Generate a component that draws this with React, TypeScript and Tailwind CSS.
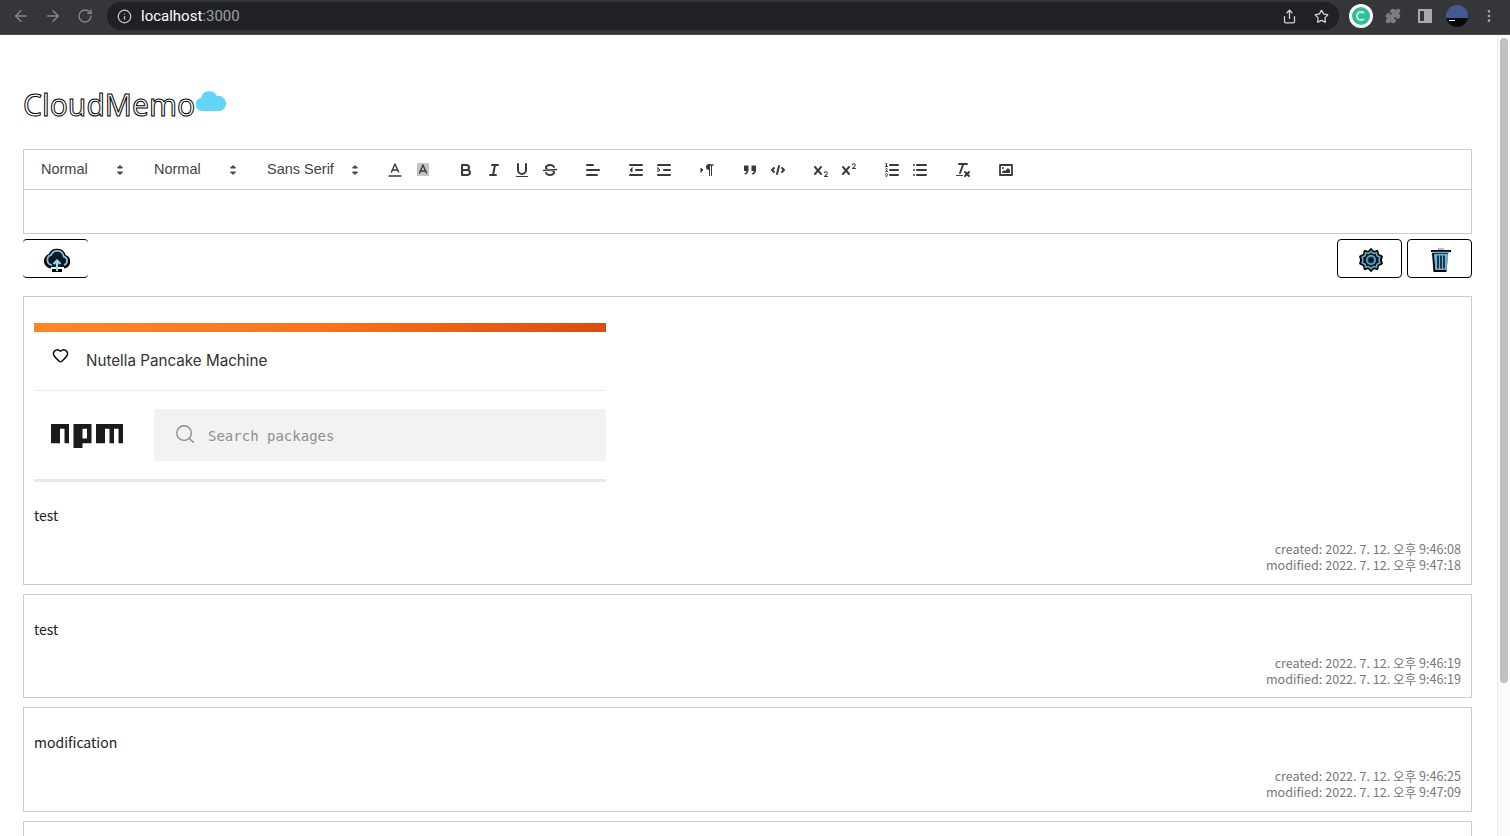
import { ArrowLeft, ArrowRight, RotateCw, Info, Share, Star, Puzzle, EllipsisVertical, Heart, Search } from "lucide-react";
import type { ReactNode } from "react";

const QlIcon = ({ children }: { children: ReactNode }) => (
  <button className="flex h-6 w-7 shrink-0 items-center justify-center">
    <svg viewBox="0 0 18 18" className="h-[18px] w-[18px] fill-none stroke-[#3a3a3a] stroke-2 [stroke-linecap:round] [stroke-linejoin:round]">
      {children}
    </svg>
  </button>
);

const Fill = "fill-[#3a3a3a] stroke-none";
const Thin = "stroke-[1.4px]";

const Picker = ({ label, w }: { label: string; w: string }) => (
  <div className={`relative mr-[15px] flex h-6 shrink-0 items-center pl-2 text-[14.5px] font-medium text-[#444] ${w}`}>
    {label}
    <svg viewBox="0 0 18 18" className="absolute right-[2px] top-[3px] h-[18px] w-[18px] fill-[#444] stroke-[#444] [stroke-linejoin:round]">
      <polygon points="6.5 11 9 13.5 11.5 11 6.5 11" />
      <polygon points="6.5 7 9 4.5 11.5 7 6.5 7" />
    </svg>
  </div>
);

const Group = ({ children }: { children: ReactNode }) => <div className="mr-[15px] flex shrink-0">{children}</div>;

const Toolbar = () => (
  <div className="flex h-[41px] items-center border border-[#ccc] py-2 pl-[9px] pr-2 [font-family:'Liberation_Sans',sans-serif]">
    <Picker label="Normal" w="w-[98px]" />
    <Picker label="Normal" w="w-[98px]" />
    <Picker label="Sans Serif" w="w-[107px]" />
    <Group>
      <QlIcon>
        <line className={Thin} x1="3" x2="15" y1="15" y2="15" />
        <polyline className={Thin} points="5.5 11 9 3 12.5 11" />
        <line className={Thin} x1="11.63" x2="6.38" y1="9" y2="9" />
      </QlIcon>
      <QlIcon>
        <rect x="3" y="2" width="12" height="13" className="fill-[#c4c4c4] stroke-none" />
        <polyline className={Thin} points="5.5 12 9 4 12.5 12" />
        <line className={Thin} x1="11.63" x2="6.38" y1="10" y2="10" />
      </QlIcon>
    </Group>
    <Group>
      <QlIcon>
        <path d="M5,4H9.5A2.5,2.5,0,0,1,12,6.5v0A2.5,2.5,0,0,1,9.5,9H5A0,0,0,0,1,5,9V4A0,0,0,0,1,5,4Z" />
        <path d="M5,9h5.5A2.5,2.5,0,0,1,13,11.5v0A2.5,2.5,0,0,1,10.5,14H5a0,0,0,0,1,0,0V9A0,0,0,0,1,5,9Z" />
      </QlIcon>
      <QlIcon>
        <line x1="7" x2="13" y1="4" y2="4" />
        <line x1="5" x2="11" y1="14" y2="14" />
        <line x1="8" x2="10" y1="14" y2="4" />
      </QlIcon>
      <QlIcon>
        <path d="M5,3V9a4.012,4.012,0,0,0,4,4H9a4.012,4.012,0,0,0,4-4V3" />
        <rect className={Fill} x="3" y="15" width="12" height="1" rx="0.5" />
      </QlIcon>
      <QlIcon>
        <line className={Thin} x1="15.5" x2="2.5" y1="8.5" y2="9.5" />
        <path className={Fill} d="M9.007,8C6.542,7.791,6,7.519,6,6.5,6,5.792,7.283,5,9,5c1.571,0,2.765.679,2.969,1.309a1,1,0,0,0,1.9-.618C13.356,4.106,11.354,3,9,3,6.2,3,4,4.538,4,6.5a3.2,3.2,0,0,0,.5,1.843Z" />
        <path className={Fill} d="M8.984,10C11.457,10.208,12,10.479,12,11.5c0,.708-1.283,1.5-3,1.5-1.571,0-2.765-.679-2.969-1.309a1,1,0,1,0-1.9.618C4.644,13.894,6.646,15,9,15c2.8,0,5-1.538,5-3.5a3.2,3.2,0,0,0-.5-1.843Z" />
      </QlIcon>
    </Group>
    <Group>
      <QlIcon>
        <line x1="3" x2="15" y1="9" y2="9" />
        <line x1="3" x2="13" y1="14" y2="14" />
        <line x1="3" x2="9" y1="4" y2="4" />
      </QlIcon>
    </Group>
    <Group>
      <QlIcon>
        <line x1="3" x2="15" y1="14" y2="14" />
        <line x1="3" x2="15" y1="4" y2="4" />
        <line x1="9" x2="15" y1="9" y2="9" />
        <polygon className="fill-[#3a3a3a] stroke-1" points="5 7 5 11 3 9 5 7" />
      </QlIcon>
      <QlIcon>
        <line x1="3" x2="15" y1="14" y2="14" />
        <line x1="3" x2="15" y1="4" y2="4" />
        <line x1="9" x2="15" y1="9" y2="9" />
        <polygon className="stroke-1" points="3 7 3 11 5 9 3 7" />
      </QlIcon>
    </Group>
    <Group>
      <QlIcon>
        <polygon className="fill-[#3a3a3a] stroke-1" points="3 11 5 9 3 7 3 11" />
        <line className={Thin} x1="15" x2="11" y1="4" y2="4" />
        <path className={Fill} d="M11,3a3,3,0,0,0,0,6h1V3H11Z" />
        <rect className={Fill} x="11" y="4" width="1" height="11" />
        <rect className={Fill} x="13" y="4" width="1" height="11" />
      </QlIcon>
    </Group>
    <Group>
      <QlIcon>
        <path className={Fill} d="M3 4.5h4.5V9c0 2.5-1.4 4.2-3.6 4.8l-.5-1.3c1.2-.5 1.8-1.2 1.9-2.5H3z" />
        <path className={Fill} d="M10.5 4.5H15V9c0 2.5-1.4 4.2-3.6 4.8l-.5-1.3c1.2-.5 1.8-1.2 1.9-2.5h-2.3z" />
      </QlIcon>
      <QlIcon>
        <polyline points="5 7 3 9 5 11" />
        <polyline points="13 7 15 9 13 11" />
        <line x1="10" x2="8" y1="5" y2="13" />
      </QlIcon>
    </Group>
    <Group>
      <QlIcon>
        <path className={Fill} d="M15.5,15H13.861a3.858,3.858,0,0,0,1.914-2.975,1.8,1.8,0,0,0-1.6-1.751A1.921,1.921,0,0,0,12.021,11.7a0.50013,0.50013,0,1,0,.957.291h0a0.914,0.914,0,0,1,1.053-.725,0.81,0.81,0,0,1,.744.762c0,1.076-1.16971,1.86982-1.93971,2.43082A1.45639,1.45639,0,0,0,12,15.5a0.5,0.5,0,0,0,.5.5h3A0.5,0.5,0,0,0,15.5,15Z" />
        <path className={Fill} d="M9.65,5.241a1,1,0,0,0-1.409.108L6,7.964,3.759,5.349A1,1,0,0,0,2.241,6.651L4.684,9.5,2.241,12.35a1,1,0,1,0,1.519,1.3L6,11.036l2.241,2.616a1,1,0,1,0,1.519-1.3L7.316,9.5,9.759,6.651A1,1,0,0,0,9.65,5.241Z" />
      </QlIcon>
      <QlIcon>
        <path className={Fill} d="M15.5,7H13.861a4.015,4.015,0,0,0,1.914-2.975,1.8,1.8,0,0,0-1.6-1.751A1.922,1.922,0,0,0,12.021,3.7a0.5,0.5,0,1,0,.957.291,0.917,0.917,0,0,1,1.053-.725,0.81,0.81,0,0,1,.744.762c0,1.077-1.164,1.925-1.934,2.486A1.423,1.423,0,0,0,12,7.5a0.5,0.5,0,0,0,.5.5h3A0.5,0.5,0,0,0,15.5,7Z" />
        <path className={Fill} d="M9.65,5.241a1,1,0,0,0-1.409.108L6,7.964,3.759,5.349A1,1,0,0,0,2.241,6.651L4.684,9.5,2.241,12.35a1,1,0,1,0,1.519,1.3L6,11.036l2.241,2.616a1,1,0,1,0,1.519-1.3L7.316,9.5,9.759,6.651A1,1,0,0,0,9.65,5.241Z" />
      </QlIcon>
    </Group>
    <Group>
      <QlIcon>
        <line x1="7" x2="15" y1="4" y2="4" />
        <line x1="7" x2="15" y1="9" y2="9" />
        <line x1="7" x2="15" y1="14" y2="14" />
        <line className="stroke-1" x1="2.5" x2="4.5" y1="5.5" y2="5.5" />
        <path className={Fill} d="M3.5,6A0.5,0.5,0,0,1,3,5.5V3.085l-0.276.138A0.5,0.5,0,0,1,2.053,3c-0.124-.247-0.023-0.324.224-0.447l1-.5A0.5,0.5,0,0,1,4,2.5v3A0.5,0.5,0,0,1,3.5,6Z" />
        <path className="stroke-1" d="M4.5,10.5h-2c0-.234,1.85-1.076,1.85-2.234A0.959,0.959,0,0,0,2.5,8.156" />
        <path className="stroke-1" d="M2.5,14.846a0.959,0.959,0,0,0,1.85-.109A0.7,0.7,0,0,0,3.75,14a0.688,0.688,0,0,0,.6-0.736,0.959,0.959,0,0,0-1.85-.109" />
      </QlIcon>
      <QlIcon>
        <line x1="6" x2="15" y1="4" y2="4" />
        <line x1="6" x2="15" y1="9" y2="9" />
        <line x1="6" x2="15" y1="14" y2="14" />
        <line x1="3" x2="3" y1="4" y2="4" />
        <line x1="3" x2="3" y1="9" y2="9" />
        <line x1="3" x2="3" y1="14" y2="14" />
      </QlIcon>
    </Group>
    <Group>
      <QlIcon>
        <line x1="5" x2="13" y1="3" y2="3" />
        <line x1="6" x2="9.35" y1="12" y2="3" />
        <line x1="11" x2="15" y1="11" y2="15" />
        <line x1="15" x2="11" y1="11" y2="15" />
        <rect className={Fill} height="1" rx="0.5" ry="0.5" width="7" x="2" y="14" />
      </QlIcon>
    </Group>
    <Group>
      <QlIcon>
        <rect className="stroke-[1.8px]" height="10" width="12" x="3" y="4" />
        <circle className={Fill} cx="6" cy="7" r="1" />
        <polyline className={Fill} points="5 12 5 11 7 9 8 10 11 7 13 9 13 12 5 12" />
      </QlIcon>
    </Group>
  </div>
);

const CloudUpload = () => (
  <svg viewBox="0 0 28 28" className="h-7 w-7">
    <path d="M8 21a6 6 0 0 1-1-11.8 7.5 7.5 0 0 1 14.4 1A5.5 5.5 0 0 1 21 21" fill="#0a1a24" stroke="#000" strokeWidth="3" />
    <path d="M9 19a5 5 0 0 1-1-9.8 6.5 6.5 0 0 1 12.6 1.3A4.4 4.4 0 0 1 21 19" fill="none" stroke="#7fc0dc" strokeWidth="1.8" />
    <path d="M9 26h10v-3H9z" fill="#000" />
    <path d="M14 25v-10M10.5 18l3.5-3.5 3.5 3.5" fill="none" stroke="#9fd8ef" strokeWidth="2.2" />
  </svg>
);

const Gear = () => (
  <svg viewBox="0 0 28 28" className="h-[26px] w-[26px]">
    <path d="M14 2l3 3 4-1 1 4 4 2-1 4 1 4-4 2-1 4-4-1-3 3-3-3-4 1-1-4-4-2 1-4-1-4 4-2 1-4 4 1z" fill="#0b1b25" stroke="#000" strokeWidth="1.5" />
    <path d="M14 4.5l2.5 2.5 3.2-.8.8 3.2 3 1.6-.8 3 .8 3-3 1.6-.8 3.2-3.2-.8-2.5 2.5-2.5-2.5-3.2.8-.8-3.2-3-1.6.8-3-.8-3 3-1.6.8-3.2 3.2.8z" fill="none" stroke="#6db3d2" strokeWidth="1.5" />
    <circle cx="14" cy="14" r="4.5" fill="#123c52" stroke="#6db3d2" strokeWidth="1.6" />
    <circle cx="14" cy="14" r="2" fill="#000" />
  </svg>
);

const Trash = () => (
  <svg viewBox="0 0 28 28" className="h-7 w-7">
    <path d="M4 5h20" stroke="#000" strokeWidth="2" />
    <path d="M5 7l1.5 19h13L21 7z" fill="#000" />
    <path d="M5.5 6.5h17" stroke="#6db3d2" strokeWidth="1.6" />
    <path d="M7.5 8.5l1.2 15h10.6l1.2-15z" fill="#6db3d2" stroke="#6db3d2" strokeWidth="1" />
    <path d="M11 9.5v13M14 9.5v13M17 9.5v13" stroke="#0b1b25" strokeWidth="1.6" />
    <path d="M11 3h6" stroke="#6db3d2" strokeWidth="1.4" />
  </svg>
);

const NpmShot = () => (
  <div className="mb-6 flex h-[159px] w-[572px] flex-col">
    <div className="h-[9px] bg-gradient-to-r from-[#f9872a] via-[#f8741a] to-[#d94e12]" />
    <div className="flex h-[59px] items-start border-b border-[#ececec] pl-[18px] pt-[14px]">
      <Heart size={17} className="mt-[1px] text-black" strokeWidth={2} />
      <span className="ml-[17px] mt-[5px] text-[15.2px] leading-[20px] text-[#333] [font-family:'Inter',sans-serif]">Nutella Pancake Machine</span>
    </div>
    <div className="flex flex-1 items-start border-b-[3px] border-[#e8e8e8] pt-[18px]">
      <svg viewBox="1 1 16 5" preserveAspectRatio="none" className="ml-[17px] mt-[15px] h-[24px] w-[72px] shrink-0 fill-[#1a1a1a]">
        <path d="M1,5h2V2h1v3h1V1H1V5z" />
        <path fillRule="evenodd" d="M6,1v5h2V5h2V1H6z M8,2h1v2H8V2z" />
        <path d="M11,1v4h2V2h1v3h1V2h1v3h1V1H11z" />
      </svg>
      <div className="ml-[31px] flex h-[52px] flex-1 items-center rounded-[2px] bg-[#f2f2f2] pl-[20px]">
        <Search size={22} className="-mt-[2px] text-[#8a8a8a]" strokeWidth={1.5} />
        <span className="ml-[12px] mt-[2px] text-[14px] text-[#8f8f8f] [font-family:'DejaVu_Sans_Mono',monospace]">Search packages</span>
      </div>
    </div>
  </div>
);

const Memo = ({ text, created, modified }: { text: string; created: string; modified: string }) => (
  <div className="mb-[9px] shrink-0 border border-[#ccc] p-[10px]">
    <p className="mt-[15px] h-[18px] text-[14px] leading-[18px] text-[#222]">{text}</p>
    <div className="mt-[17px] text-right text-[12.6px] leading-4 text-[#777]">
      <div>created: {created}</div>
      <div>modified: {modified}</div>
    </div>
  </div>
);

export default function App() {
  return (
    <div className="flex h-[836px] flex-col overflow-hidden bg-white [font-family:'Noto_Sans_CJK_KR','Noto_Sans',sans-serif]">
      <header className="flex h-[35px] shrink-0 items-center border-b border-[#4a4c50] bg-[#35363a] pb-[2px] [font-family:'Roboto',sans-serif]">
        <div className="flex items-center gap-[14px] pl-[12px] text-[#85878a]">
          <ArrowLeft size={18} />
          <ArrowRight size={18} />
          <RotateCw size={16} className="ml-[1px]" />
        </div>
        <div className="ml-[14px] flex h-[28px] w-[1232px] items-center justify-between rounded-full bg-[#202124] pl-[10px] pr-[10px]">
          <div className="flex items-center gap-[9px]">
            <Info size={15} className="text-[#c8c9cb]" />
            <span className="text-[15px] text-white">
              localhost<span className="text-[#9aa0a6]">:3000</span>
            </span>
          </div>
          <div className="flex items-center gap-[17px] text-[#d5d6d8]">
            <Share size={15} />
            <Star size={15} />
          </div>
        </div>
        <div className="ml-[10px] flex h-6 w-6 items-center justify-center rounded-full bg-white">
          <div className="flex h-[18px] w-[18px] items-center justify-center rounded-full bg-[#2fbf9f]">
            <div className="h-[10px] w-[10px] rounded-full border-2 border-[#c6efe4] border-r-transparent" />
          </div>
        </div>
        <Puzzle size={16} className="ml-[12px] fill-[#7b7d80] text-[#7b7d80]" />
        <div className="ml-[17px] flex h-[14px] w-[14px] border-2 border-[#a9aaac]">
          <div className="ml-auto h-full w-[6px] bg-[#a9aaac]" />
        </div>
        <div className="ml-[14px] flex h-[22px] w-[22px] flex-col overflow-hidden rounded-full">
          <div className="h-[13px] bg-[#46598f]" />
          <div className="flex-1 bg-[#0a0a0a]">
            <div className="ml-[3px] mt-[2px] h-[1px] w-[6px] bg-white" />
          </div>
        </div>
        <EllipsisVertical size={16} className="ml-[13px] text-[#a9aaac]" />
      </header>

      <div className="flex min-h-0 flex-1">
        <main className="flex min-w-0 flex-1 flex-col pl-[23px] pr-[25px]">
          <div className="flex h-[114px] shrink-0 items-start pt-[46px]">
            <h1 className="text-[30px] font-normal leading-[48px] text-white [font-family:'Noto_Sans',sans-serif] [-webkit-text-stroke:1px_#000]">CloudMemo</h1>
            <svg viewBox="0 0 32 24" className="mt-[7px] h-[24px] w-[32px]">
              <path d="M7 23a6.5 6.5 0 0 1-1-12.9A8.5 8.5 0 0 1 22 8a7.5 7.5 0 0 1 3 15z" fill="#62d5f8" />
            </svg>
          </div>
          <Toolbar />
          <div className="h-[44px] shrink-0 border-x border-b border-[#ccc]" />
          <div className="mb-[18px] mt-[5px] flex shrink-0 justify-between">
            <button className="flex h-[39px] w-[65px] items-center justify-center rounded-[4px] border-y border-x-[#eee] border-y-black pl-[2px] pt-[2px]">
              <CloudUpload />
            </button>
            <div className="flex gap-[5px]">
              <button className="flex h-[39px] w-[65px] items-center justify-center rounded-[4px] border border-black pl-[2px] pt-[2px]">
                <Gear />
              </button>
              <button className="flex h-[39px] w-[65px] items-center justify-center rounded-[4px] border border-black pl-[2px] pt-[2px]">
                <Trash />
              </button>
            </div>
          </div>
          <div className="mb-[9px] shrink-0 border border-[#ccc] px-[10px] pb-[11px] pt-[10px]">
            <div className="mt-4">
              <NpmShot />
              <p className="h-[18px] text-[14px] leading-[18px] text-[#222]">test</p>
            </div>
            <div className="mt-[17px] text-right text-[12.6px] leading-4 text-[#777]">
              <div>created: 2022. 7. 12. 오후 9:46:08</div>
              <div>modified: 2022. 7. 12. 오후 9:47:18</div>
            </div>
          </div>
          <Memo text="test" created="2022. 7. 12. 오후 9:46:19" modified="2022. 7. 12. 오후 9:46:19" />
          <div className="mb-[9px] shrink-0 border border-[#ccc] px-[10px] pb-[11px] pt-[10px]">
            <p className="mt-[15px] h-[18px] text-[14px] leading-[18px] text-[#222]">modification</p>
            <div className="mt-[17px] text-right text-[12.6px] leading-4 text-[#777]">
              <div>created: 2022. 7. 12. 오후 9:46:25</div>
              <div>modified: 2022. 7. 12. 오후 9:47:09</div>
            </div>
          </div>
          <div className="h-[104px] shrink-0 border border-[#ccc]" />
        </main>
        <aside className="w-[13px] shrink-0 border-l border-[#ececec] bg-[#fbfbfb] px-[2px] pt-[3px]">
          <div className="h-[645px] rounded-full bg-[#c1c1c1]" />
        </aside>
      </div>
    </div>
  );
}
